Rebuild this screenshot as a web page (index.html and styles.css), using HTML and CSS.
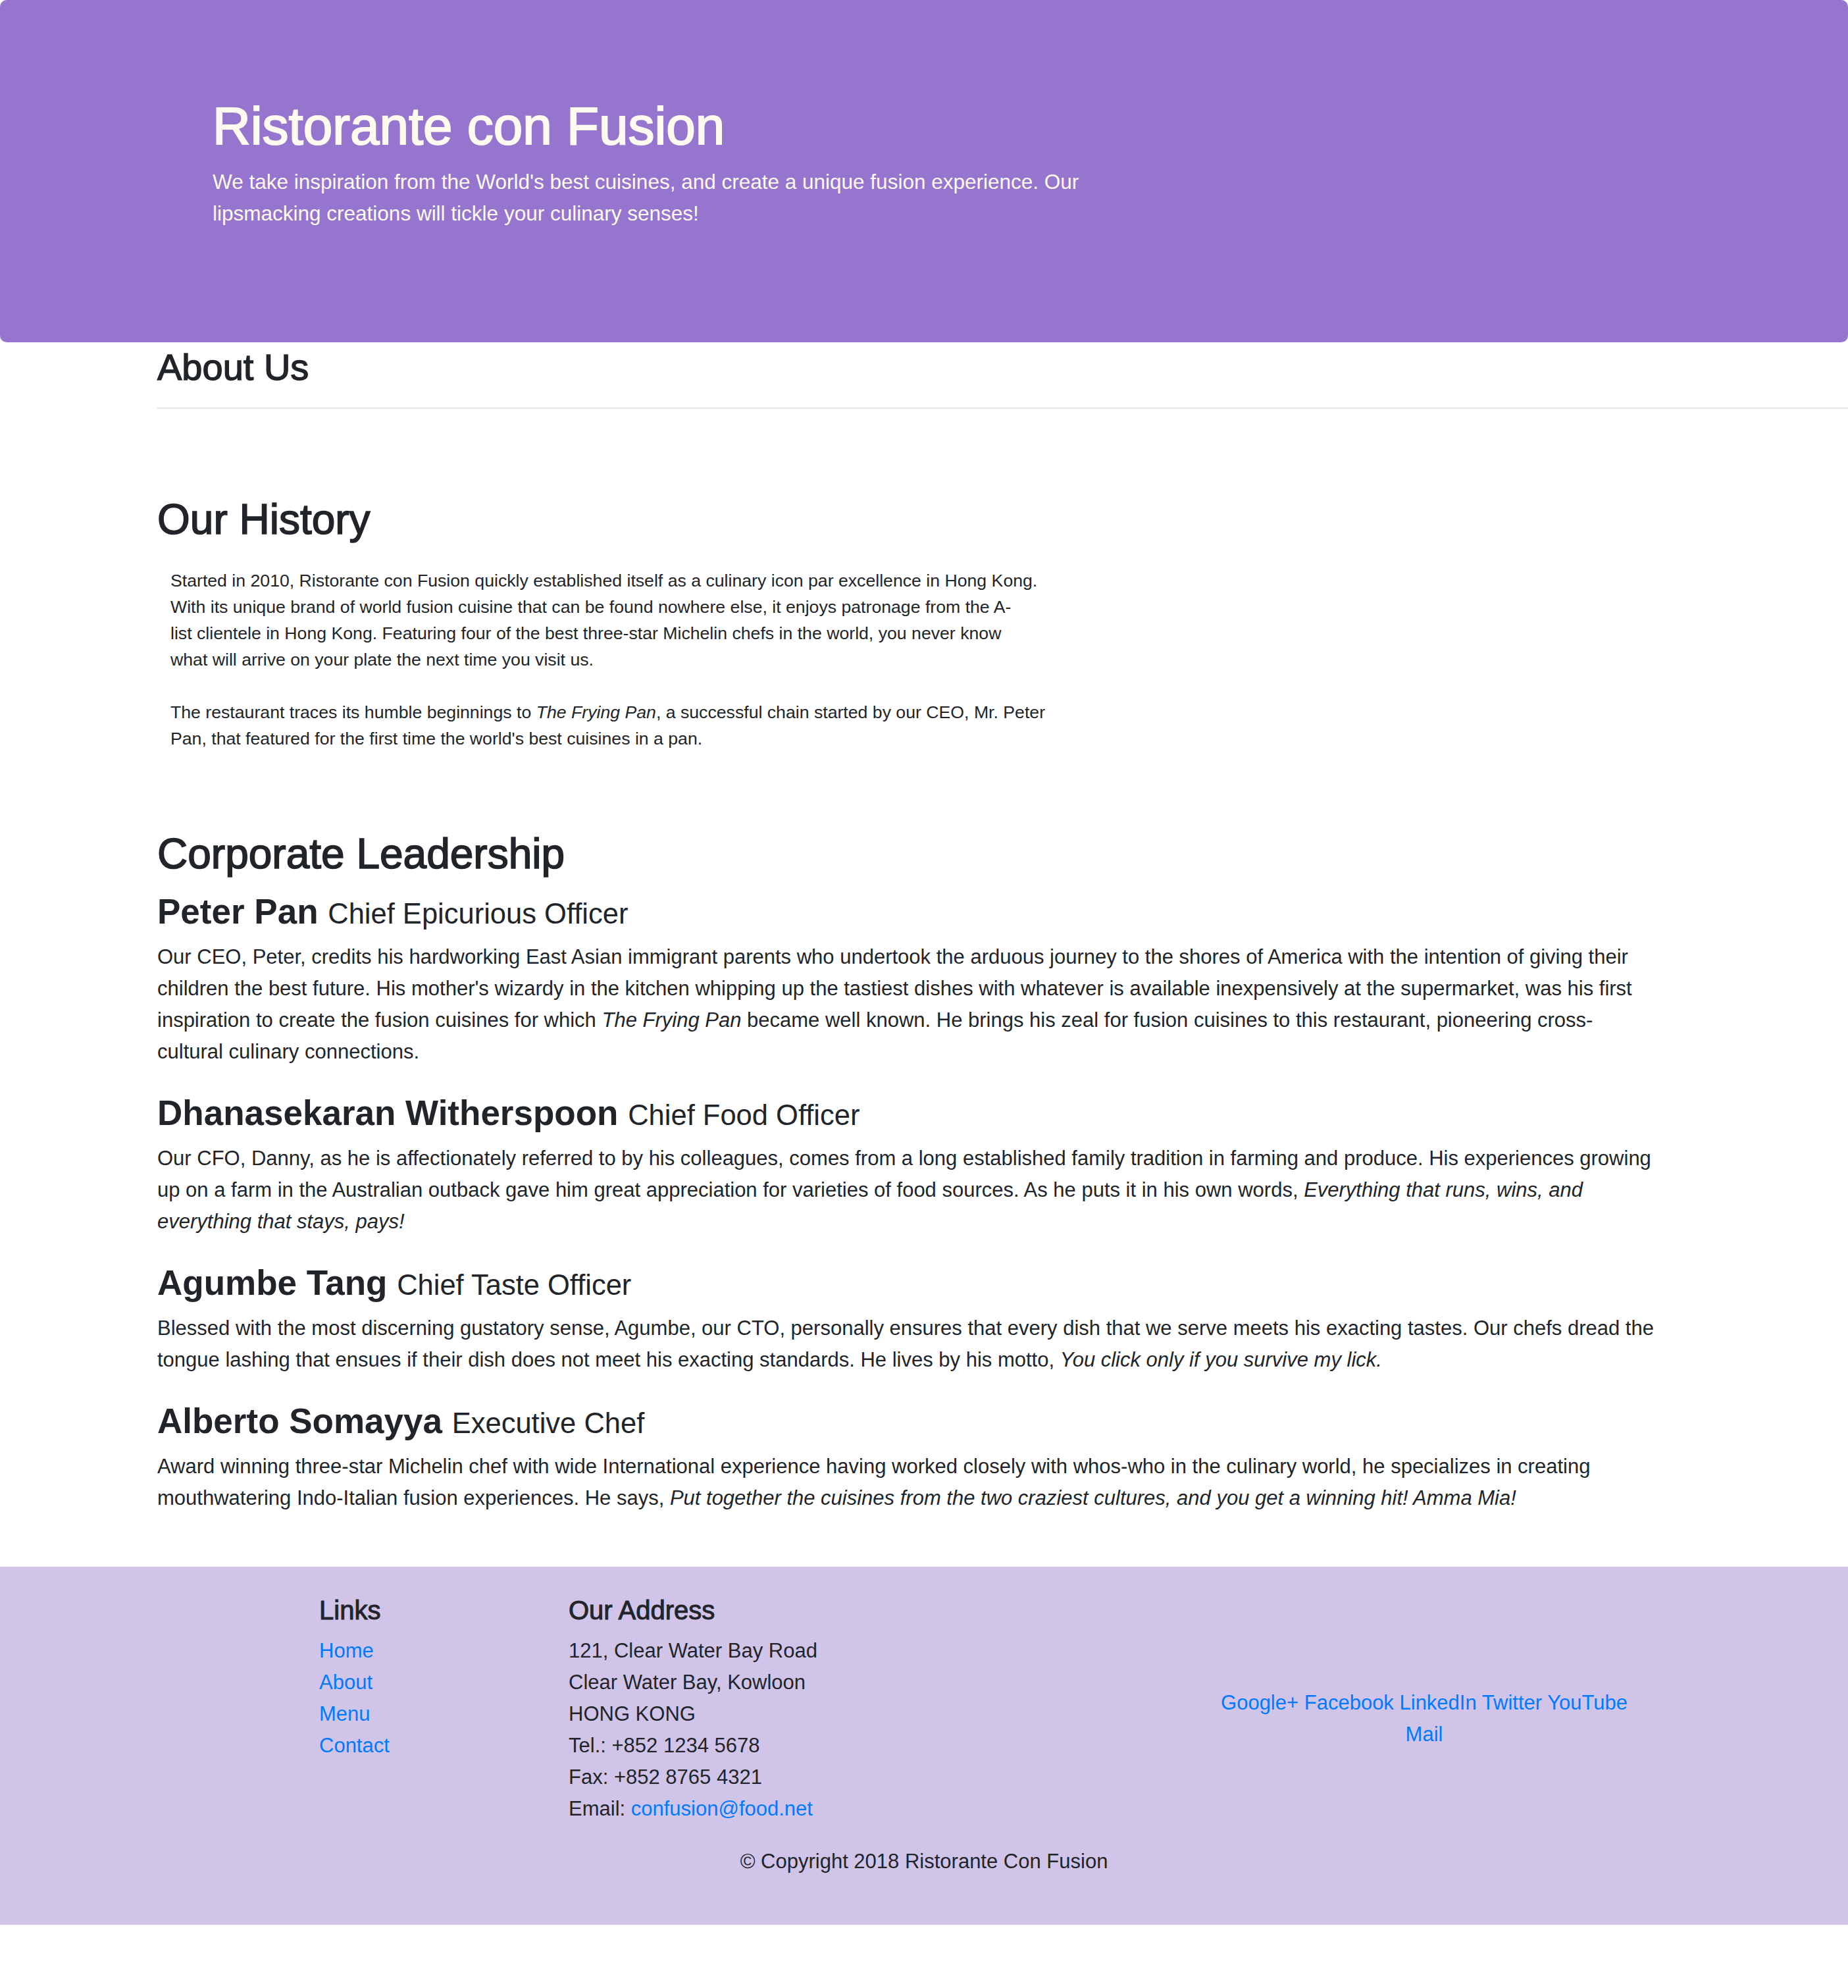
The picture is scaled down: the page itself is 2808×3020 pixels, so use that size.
FILE: index.html
```html
<!DOCTYPE html>
<html lang="en">
<head>
<meta charset="utf-8">
<title>Ristorante con Fusion: About Us</title>
<link rel="stylesheet" href="styles.css">
</head>
<body>
<header class="jumbotron">
  <h1 class="brand">Ristorante con Fusion</h1>
  <p class="tagline">We take inspiration from the World's best cuisines, and create a unique fusion experience. Our lipsmacking creations will tickle your culinary senses!</p>
</header>

<main class="content">
  <h3 class="page-title">About Us</h3>
  <hr class="rule">

  <section class="history">
    <h2 class="section-title">Our History</h2>
    <div class="history-text">
      <p>Started in 2010, Ristorante con Fusion quickly established itself as a culinary icon par excellence in Hong Kong.<br>With its unique brand of world fusion cuisine that can be found nowhere else, it enjoys patronage from the A-<br>list clientele in Hong Kong. Featuring four of the best three-star Michelin chefs in the world, you never know<br>what will arrive on your plate the next time you visit us.</p>
      <p>The restaurant traces its humble beginnings to <em>The Frying Pan</em>, a successful chain started by our CEO, Mr. Peter<br>Pan, that featured for the first time the world's best cuisines in a pan.</p>
    </div>
  </section>

  <section class="leadership">
    <h2 class="section-title leadership-title">Corporate Leadership</h2>

    <div class="leader">
      <h4 class="leader-name">Peter Pan <small class="leader-role">Chief Epicurious Officer</small></h4>
      <p class="leader-text leader-text--ceo">Our CEO, Peter, credits his hardworking East Asian immigrant parents who undertook the arduous journey to the shores of America with the intention of giving their children the best future. His mother's wizardy in the kitchen whipping up the tastiest dishes with whatever is available inexpensively at the supermarket, was his first inspiration to create the fusion cuisines for which <em>The Frying Pan</em> became well known. He brings his zeal for fusion cuisines to this restaurant, pioneering cross-cultural culinary connections.</p>
    </div>

    <div class="leader">
      <h4 class="leader-name">Dhanasekaran Witherspoon <small class="leader-role">Chief Food Officer</small></h4>
      <p class="leader-text">Our CFO, Danny, as he is affectionately referred to by his colleagues, comes from a long established family tradition in farming and produce. His experiences growing up on a farm in the Australian outback gave him great appreciation for varieties of food sources. As he puts it in his own words, <em>Everything that runs, wins, and everything that stays, pays!</em></p>
    </div>

    <div class="leader">
      <h4 class="leader-name">Agumbe Tang <small class="leader-role">Chief Taste Officer</small></h4>
      <p class="leader-text">Blessed with the most discerning gustatory sense, Agumbe, our CTO, personally ensures that every dish that we serve meets his exacting tastes. Our chefs dread the tongue lashing that ensues if their dish does not meet his exacting standards. He lives by his motto, <em>You click only if you survive my lick.</em></p>
    </div>

    <div class="leader">
      <h4 class="leader-name">Alberto Somayya <small class="leader-role">Executive Chef</small></h4>
      <p class="leader-text">Award winning three-star Michelin chef with wide International experience having worked closely with whos-who in the culinary world, he specializes in creating mouthwatering Indo-Italian fusion experiences. He says, <em>Put together the cuisines from the two craziest cultures, and you get a winning hit! Amma Mia!</em></p>
    </div>
  </section>
</main>

<footer class="footer">
  <div class="footer-row">
    <div class="footer-links">
      <h5 class="footer-title">Links</h5>
      <ul class="link-list">
        <li><a href="#">Home</a></li>
        <li><a href="#">About</a></li>
        <li><a href="#">Menu</a></li>
        <li><a href="#">Contact</a></li>
      </ul>
    </div>
    <div class="footer-address">
      <h5 class="footer-title">Our Address</h5>
      <address class="address">121, Clear Water Bay Road<br>Clear Water Bay, Kowloon<br>HONG KONG<br>Tel.: +852 1234 5678<br>Fax: +852 8765 4321<br>Email: <a href="mailto:confusion@food.net">confusion@food.net</a></address>
    </div>
    <div class="footer-social">
      <a href="#">Google+</a> <a href="#">Facebook</a> <a href="#">LinkedIn</a> <a href="#">Twitter</a> <a href="#">YouTube</a> <a href="#">Mail</a>
    </div>
  </div>
  <p class="copyright">© Copyright 2018 Ristorante Con Fusion</p>
</footer>
</body>
</html>
```

FILE: styles.css
```css
* {
  box-sizing: border-box;
}

html,
body {
  margin: 0;
  padding: 0;
}

body {
  font-family: "Liberation Sans", Arial, sans-serif;
  color: #212529;
  background: #ffffff;
}

a {
  color: #007bff;
  text-decoration: none;
}

/* ---------- Jumbotron ---------- */
.jumbotron {
  background: #9575cd;
  color: #fffaf0;
  border-radius: 10px;
  height: 520px;
  padding: 144px 0 0 323px;
}

.brand {
  margin: 0 0 12px;
  font-size: 80px;
  line-height: 96px;
  font-weight: 400;
  -webkit-text-stroke: 2px currentColor;
}

.tagline {
  margin: 0;
  width: 1400px;
  font-size: 31.5px;
  line-height: 48px;
}

/* ---------- Main content ---------- */
.content {
  padding-left: 239px;
}

.page-title {
  margin: 4px 0 0;
  font-size: 56px;
  line-height: 67px;
  font-weight: 400;
  -webkit-text-stroke: 1.4px currentColor;
}

.rule {
  margin: 28px 0 0;
  height: 0;
  border: 0;
  border-top: 2px solid rgba(0, 0, 0, 0.1);
}

.section-title {
  margin: 0;
  font-size: 64px;
  line-height: 77px;
  font-weight: 400;
  -webkit-text-stroke: 1.6px currentColor;
}

.history {
  padding-top: 130px;
}

.history-text {
  margin-top: 34px;
  padding-left: 20px;
  width: 1370px;
  font-size: 26.67px;
  line-height: 40px;
}

.history-text p {
  margin: 0 0 40px;
}

.history-text p:last-child {
  margin-bottom: 0;
}

.leadership {
  padding-top: 117px;
  padding-bottom: 80px;
}

.leadership-title {
  margin-bottom: 17px;
}

.leader-name {
  margin: 0 0 13px;
  font-size: 53px;
  line-height: 64px;
  font-weight: 700;
}

.leader-role {
  font-size: 43.5px;
  line-height: 1;
  font-weight: 400;
}

.leader-text {
  margin: 0 0 37px;
  max-width: 2300px;
  font-size: 31px;
  line-height: 48px;
}

.leader-text--ceo {
  max-width: 2271px;
}

.leader:last-child .leader-text {
  margin-bottom: 0;
}

/* ---------- Footer ---------- */
.footer {
  background: #d1c4e9;
  padding: 42px 0 72px;
  font-size: 31px;
  line-height: 48px;
}

.footer-row {
  display: flex;
  align-items: flex-start;
  padding-left: 485px;
}

.footer-links {
  width: 379px;
}

.footer-address {
  width: 970px;
}

.footer-social {
  width: 660px;
  padding-top: 141px;
  text-align: center;
}

.footer-title {
  margin: 0 0 14px;
  font-size: 40px;
  line-height: 48px;
  font-weight: 400;
  -webkit-text-stroke: 1px currentColor;
}

.link-list {
  margin: 0;
  padding: 0;
  list-style: none;
}

.address {
  margin: 0;
  font-style: normal;
}

.copyright {
  margin: 32px 0 0;
  text-align: center;
}
```
